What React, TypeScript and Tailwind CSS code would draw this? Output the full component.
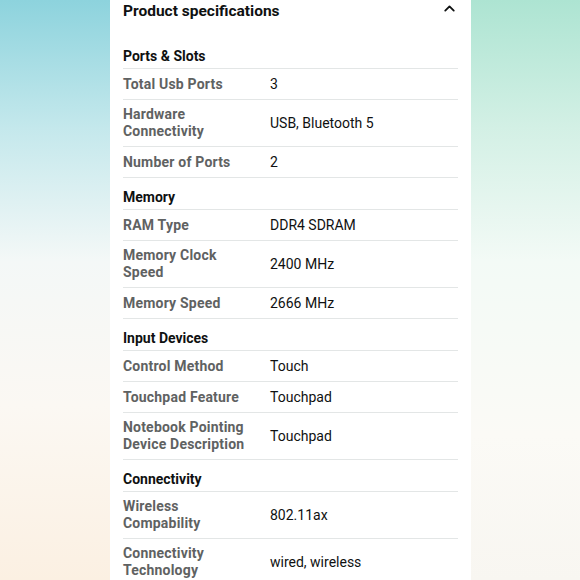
import { ChevronUp } from 'lucide-react';

type Row = { label: string; value: string };
type Section = { title: string; rows: Row[] };

const sections: Section[] = [
  {
    title: 'Ports & Slots',
    rows: [
      { label: 'Total Usb Ports', value: '3' },
      { label: 'Hardware Connectivity', value: 'USB, Bluetooth 5' },
      { label: 'Number of Ports', value: '2' },
    ],
  },
  {
    title: 'Memory',
    rows: [
      { label: 'RAM Type', value: 'DDR4 SDRAM' },
      { label: 'Memory Clock Speed', value: '2400 MHz' },
      { label: 'Memory Speed', value: '2666 MHz' },
    ],
  },
  {
    title: 'Input Devices',
    rows: [
      { label: 'Control Method', value: 'Touch' },
      { label: 'Touchpad Feature', value: 'Touchpad' },
      { label: 'Notebook Pointing Device Description', value: 'Touchpad' },
    ],
  },
  {
    title: 'Connectivity',
    rows: [
      { label: 'Wireless Compability', value: '802.11ax' },
      { label: 'Connectivity Technology', value: 'wired, wireless' },
    ],
  },
];

export default function App() {
  return (
    <div
      className="flex h-[580px] w-[580px] overflow-hidden"
      style={{ fontFamily: 'Roboto, "Noto Sans", sans-serif' }}
    >
      <div className="w-[110px] shrink-0 bg-[linear-gradient(to_bottom,#8dd3dd_0%,#c4e8ec_22%,#f4f8f7_45%,#fbf8f3_70%,#fbf0e2_100%)]" />

      <div className="w-[361px] shrink-0 bg-white px-[13px]">
        <div className="flex h-[37px] items-start justify-between pt-[1px]">
          <h2 className="text-[15.5px] font-bold leading-[20px] text-[#0f1111]">
            Product specifications
          </h2>
          <ChevronUp size={17} strokeWidth={2.6} className="-mt-[1px] text-[#0f1111]" />
        </div>

        <div className="w-[335px]">
          {sections.map((s) => (
            <div key={s.title}>
              <div className="border-b border-[#e3e6e6] pt-[11px] pb-[3px] text-[14px] font-bold leading-[17px] text-[#0f1111]">
                {s.title}
              </div>
              {s.rows.map((r) => (
                <div
                  key={r.label}
                  className="flex min-h-[31px] items-center border-b border-[#e3e6e6] py-[6px] text-[14px] leading-[17px]"
                >
                  <div className="w-[147px] shrink-0 pr-[14px] font-bold tracking-[0.2px] text-[#5f6262]">
                    {r.label}
                  </div>
                  <div className="text-[#0f1111]">{r.value}</div>
                </div>
              ))}
            </div>
          ))}
        </div>
      </div>

      <div className="flex-1 bg-[linear-gradient(to_bottom,#ade4d2_0%,#d3f0e5_22%,#f3faf6_45%,#fbfaf6_75%,#f8f6f1_100%)]" />
    </div>
  );
}
